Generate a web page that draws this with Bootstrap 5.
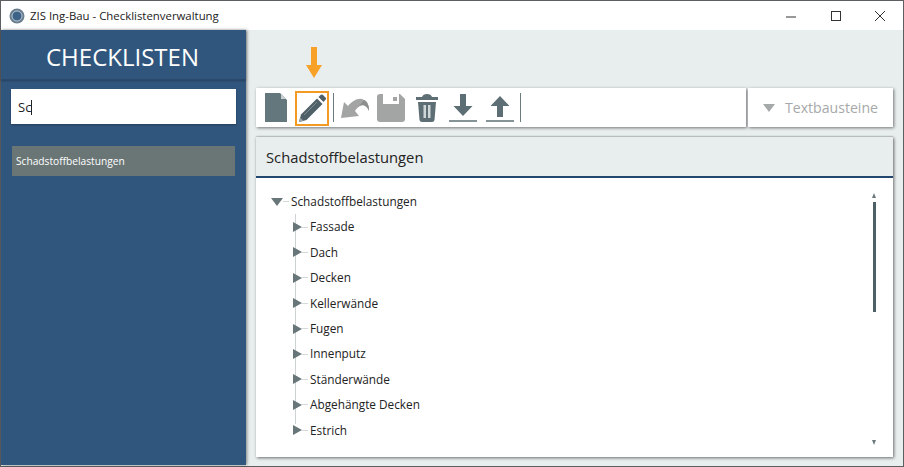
<!DOCTYPE html>
<html lang="de">
<head>
<meta charset="utf-8">
<title>ZIS Ing-Bau - Checklistenverwaltung</title>
<link href="https://cdn.jsdelivr.net/npm/bootstrap@5.3.0/dist/css/bootstrap.min.css" rel="stylesheet">
<style>
html,body{margin:0;height:467px;overflow:hidden;background:#fff}
body{font-family:"Open Sans","Noto Sans",sans-serif;color:#222}
.appwin{width:904px;height:467px;border:1px solid #5c5f61;background:#e8eded}
.titlebar{height:29px;background:#fff;font-size:11.4px;color:#222;padding-left:8px}
.titlebar .ttl{margin-left:5px}
.winbtns{margin-left:auto;padding-right:17px;gap:32.5px}
.bodyarea{height:435px}
.sidebar{width:245px;background:#31567d;box-shadow:1px 0 3px rgba(0,0,0,.45);z-index:1}
.sidehead{height:50px;color:#fff;font-size:24px;text-align:center;line-height:54px;border-bottom:1px solid #2a4a6c;box-shadow:0 1px 2px rgba(0,0,0,.25);padding-right:2px}
.searchbox{margin:9px 10px 0 10px;height:35px;background:#fff;font-size:13px;padding:0 0 0 7px;line-height:36px;color:#222;box-shadow:0 1px 2px rgba(0,0,0,.3)}
.caret-bar{display:inline-block;width:1px;height:15px;background:#222;vertical-align:-3px}
.sideitem{margin:22px 11px 0 11px;height:30px;background:#6a7676;color:#fff;font-size:10.2px;line-height:30px;padding-left:4px}
.mainarea{flex:1;padding:0 10px;min-width:0}
.arrowzone{height:58px;padding:17px 0 0 50px}
.toolrow{height:39px;gap:2px}
.toolbox{background:#fff;box-shadow:1px 1px 3px rgba(0,0,0,.5);height:39px}
.toolmain{width:490px;padding-left:9px}
.toolside{width:145px;color:#a6a9a9;font-size:14.1px;padding-left:15px;gap:10px}
.tbtn-active{width:34px;height:35px;flex:none;border:2px solid #f39a22;margin-left:8px;margin-top:1px}
.tsep{width:1px;height:29px;background:#6b7a7d;flex:none}
.ic{display:block;flex:none}
.gap4{margin-left:4px}.gap6{margin-left:6px}.gap7{margin-left:7px}.gap8{margin-left:8px}.gap9{margin-left:9px}.gap11{margin-left:11px}
.treepanel{margin-top:10px;height:320px;background:#fff;box-shadow:1px 1px 3px rgba(0,0,0,.55);position:relative}
.treehead{height:41px;background:#e8eded;border-bottom:2px solid #21476e;font-size:14.75px;padding-left:10px;line-height:41px;color:#222;box-shadow:0 -1px 1px rgba(0,0,0,.12)}
.treebody{padding:11px 0 0 15px;font-size:11.8px;color:#222}
.treenode{height:25.4px;line-height:25.4px;display:flex;align-items:center}
.tri-d{width:0;height:0;border-left:6.500px solid transparent;border-right:6.500px solid transparent;border-top:8px solid #687679;flex:none}
.tlink{width:6px;height:1px;background:#d3d8d8;flex:none}
.kids{margin-left:24px;border-left:1px solid #cdd3d3;height:210px}
.kids .treenode{margin-left:-3px}
.tri-r{width:0;height:0;border-top:5px solid transparent;border-bottom:5px solid transparent;border-left:9px solid #687679;flex:none}
.rootlabel{margin-left:2px}
.kidlabel{margin-left:2px}
.scrollcol{position:absolute;right:16px;top:56px;width:5px;height:252px}
.sc-up{position:absolute;top:0;left:0;width:0;height:0;border-left:2.5px solid transparent;border-right:2.5px solid transparent;border-bottom:5px solid #6d7a7c}
.sc-thumb{position:absolute;top:9px;left:1px;width:3px;height:110px;background:#4d6068}
.sc-down{position:absolute;bottom:0;left:0;width:0;height:0;border-left:2.5px solid transparent;border-right:2.5px solid transparent;border-top:5px solid #6d7a7c}
</style>
</head>
<body>
<div class="appwin">
  <div class="titlebar d-flex align-items-center">
    <svg width="16" height="16" viewBox="0 0 16 16"><circle cx="8" cy="8" r="7.5" fill="#6b7f90"/><circle cx="8" cy="8" r="5" fill="#3d6288" stroke="#b9c6d0" stroke-width="1"/></svg>
    <span class="ttl">ZIS Ing-Bau - Checklistenverwaltung</span>
    <div class="winbtns d-flex align-items-center">
      <svg width="12" height="12" viewBox="0 0 12 12"><path d="M1 7h10" stroke="#333" stroke-width="1"/></svg>
      <svg width="12" height="12" viewBox="0 0 12 12"><rect x="1.5" y="1.5" width="9" height="9" fill="none" stroke="#333" stroke-width="1"/></svg>
      <svg width="12" height="12" viewBox="0 0 12 12"><path d="M1 1l10 10M11 1L1 11" stroke="#333" stroke-width="1"/></svg>
    </div>
  </div>
  <div class="bodyarea d-flex">
    <aside class="sidebar">
      <div class="sidehead">CHECKLISTEN</div>
      <div class="searchbox">Sc<span class="caret-bar"></span></div>
      <div class="sideitem">Schadstoffbelastungen</div>
    </aside>
    <main class="mainarea">
      <div class="arrowzone">
        <svg width="16" height="31" viewBox="0 0 16 31" class="d-block"><path d="M5 0h6v18h5L8 31 0 18h5z" fill="#f7a128"/></svg>
      </div>
      <div class="toolrow d-flex">
        <div class="toolbox toolmain d-flex align-items-center">
          <svg class="ic" width="22" height="29" viewBox="0 0 22 29"><path d="M0 0h15l7 7v22H0z" fill="#64777c"/><path d="M16 1l5 5h-5z" fill="#c9d0d2"/></svg>
          <div class="tbtn-active d-flex align-items-center justify-content-center">
            <svg class="ic" width="27" height="28" viewBox="0 0 27 28"><path d="M0 28l2-7.500L18 4.500l5.500 5.500L7.500 26z" fill="#4f6068"/><path d="M19.500 3l2-2q1-1 2.200-.2l2.800 2.800q1 1.200 0 2.200L24.500 8z" fill="#4f6068"/><path d="M0 28l1-4.500 3.500 3.500z" fill="#9aa6a9"/><path d="M5 21L18 8" stroke="#81908f" stroke-width="1"/></svg>
          </div>
          <div class="tsep gap4"></div>
          <svg class="ic gap7" width="28" height="22" viewBox="0 0 28 22"><path d="M0 21L3 5l4 4C12 3 19 0 23 3c4 2 5 6 5 11-2-5-6-7-9-5-2 1-4 3-5 5l4 5z" fill="#a3a5a5"/><path d="M23 3c4 2 5 6 5 11-1-3-3-5-5-6-2 0-3 0-5 1 2-2 3-4 5-6z" fill="#8d8f8f"/></svg>
          <svg class="ic gap8" width="28" height="28" viewBox="0 0 28 28"><path d="M3 0h20l5 5v20a3 3 0 0 1-3 3H3a3 3 0 0 1-3-3V3a3 3 0 0 1 3-3z" fill="#a3a5a5"/><path d="M6 0h16v10H6z" fill="#fff"/><path d="M16 3h4v4h-4z" fill="#a3a5a5"/></svg>
          <svg class="ic gap11" width="22" height="28" viewBox="0 0 22 28"><path d="M0 3h22v3H0z" fill="#5d6f74"/><path d="M6 3Q7 0 11 0t5 3z" fill="#5d6f74"/><path d="M2 8h18l-1.500 18q-.2 2-2.500 2H6q-2.300 0-2.500-2z" fill="#5d6f74"/><path d="M7.500 11h2.500v13H7.500zM12 11h2.500v13H12z" fill="#cfd6d7"/></svg>
          <svg class="ic gap11" width="28" height="28" viewBox="0 0 28 28"><path d="M11 0h6v12h6.500L14 22 4.500 12H11z" fill="#5d6f74"/><path d="M0 27h28" stroke="#5d6f74" stroke-width="1.500"/></svg>
          <svg class="ic gap9" width="28" height="28" viewBox="0 0 28 28"><path d="M11 23h6V12h6.500L14 2 4.500 12H11z" fill="#5d6f74"/><path d="M0 27h28" stroke="#5d6f74" stroke-width="1.500"/></svg>
          <div class="tsep gap6"></div>
        </div>
        <div class="toolbox toolside d-flex align-items-center">
          <span class="tri-d" style="border-top-color:#a6a9a9"></span>
          <span>Textbausteine</span>
        </div>
      </div>
      <section class="treepanel">
        <div class="treehead">Schadstoffbelastungen</div>
        <div class="treebody">
          <div class="treenode"><span class="tri-d"></span><span class="tlink"></span><span class="rootlabel">Schadstoffbelastungen</span></div>
          <div class="kids">
            <div class="treenode"><span class="tri-r"></span><span class="tlink"></span><span class="kidlabel">Fassade</span></div>
            <div class="treenode"><span class="tri-r"></span><span class="tlink"></span><span class="kidlabel">Dach</span></div>
            <div class="treenode"><span class="tri-r"></span><span class="tlink"></span><span class="kidlabel">Decken</span></div>
            <div class="treenode"><span class="tri-r"></span><span class="tlink"></span><span class="kidlabel">Kellerwände</span></div>
            <div class="treenode"><span class="tri-r"></span><span class="tlink"></span><span class="kidlabel">Fugen</span></div>
            <div class="treenode"><span class="tri-r"></span><span class="tlink"></span><span class="kidlabel">Innenputz</span></div>
            <div class="treenode"><span class="tri-r"></span><span class="tlink"></span><span class="kidlabel">Ständerwände</span></div>
            <div class="treenode"><span class="tri-r"></span><span class="tlink"></span><span class="kidlabel">Abgehängte Decken</span></div>
            <div class="treenode"><span class="tri-r"></span><span class="tlink"></span><span class="kidlabel">Estrich</span></div>
          </div>
        </div>
        <div class="scrollcol"><span class="sc-up"></span><span class="sc-thumb"></span><span class="sc-down"></span></div>
      </section>
    </main>
  </div>
</div>
</body>
</html>
